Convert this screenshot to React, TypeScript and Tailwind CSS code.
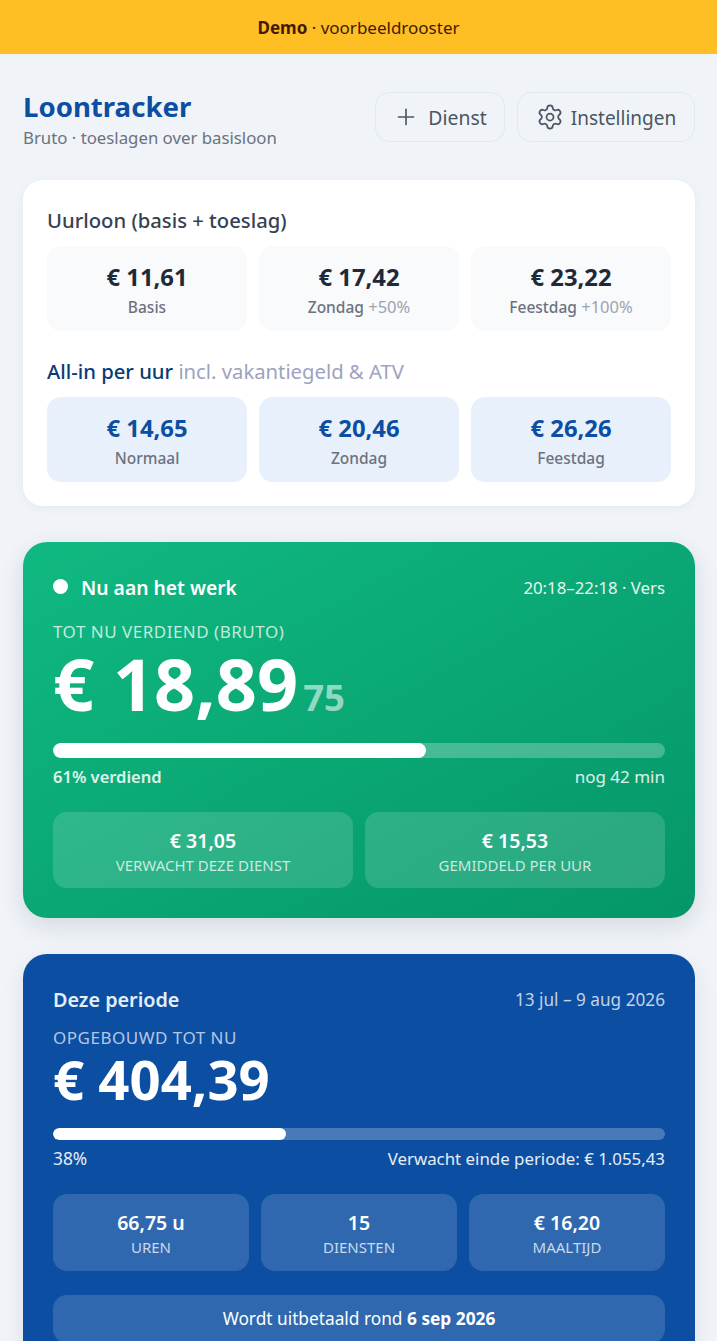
import { Plus, Settings } from "lucide-react";

function Tile({ value, label, extra, blue }: { value: string; label: string; extra?: string; blue?: boolean }) {
  return (
    <div className={`h-[85px] rounded-[14px] flex flex-col items-center pt-[15px] ${blue ? "bg-[#e8f0fb]" : "bg-[#f9fafc]"}`}>
      <div className={`text-[23.8px] leading-[33px] font-bold ${blue ? "text-[#0b4ea2]" : "text-[#1f2937]"}`}>{value}</div>
      <div className="text-[15.5px] leading-[22px] font-medium text-[#6b7280] mt-[2px]">
        {label}
        {extra ? <span className="text-[16.5px] font-normal text-[#9ca3af]"> {extra}</span> : null}
      </div>
    </div>
  );
}

function Stat({ value, label, h }: { value: string; label: string; h: string }) {
  return (
    <div className={`${h} rounded-[14px] bg-white/15 flex flex-col items-center pt-[17px]`}>
      <div className="text-[19.5px] leading-[24px] font-semibold text-white">{value}</div>
      <div className="text-[15px] leading-[20px] text-white/75 mt-[2px]">{label}</div>
    </div>
  );
}

export default function App() {
  return (
    <div className="h-[1341px] overflow-hidden bg-[#f0f4f9] font-['Noto_Sans',sans-serif]">
      <div className="h-[54px] pt-[1px] bg-[#fdbf24] flex items-center justify-center text-[17px] text-[#451a03]">
        <span><b className="font-bold">Demo</b> · voorbeeldrooster</span>
      </div>
      <div className="pl-[23px] pr-[22px]">
        <div className="flex items-start justify-between pt-[35px] h-[126px]">
          <div>
            <div className="text-[27.6px] leading-[34px] font-bold text-[#0b4ea2]">Loontracker</div>
            <div className="text-[16.8px] leading-[24px] text-[#6b7280] mt-[3px]">Bruto · toeslagen over basisloon</div>
          </div>
          <div className="flex gap-3 pt-[3px]">
            <div className="h-[50px] w-[130px] rounded-[14px] border border-[#e2e8f0] bg-[#f0f4f9] flex items-center justify-center gap-[9px] text-[19.4px] text-[#4b5563]">
              <Plus size={26} strokeWidth={1.5} />
              <span className="pt-[2px]">Dienst</span>
            </div>
            <div className="h-[50px] w-[178px] rounded-[14px] border border-[#e2e8f0] bg-[#f0f4f9] flex items-center justify-center gap-[7px] text-[19px] text-[#4b5563]">
              <Settings size={28} strokeWidth={1.5} />
              <span className="pt-[2px]">Instellingen</span>
            </div>
          </div>
        </div>

        <div className="h-[326px] rounded-[20px] bg-white shadow-[0_2px_10px_rgba(15,23,42,0.05)] px-[24px] pt-[25px]">
          <div className="text-[20.25px] leading-[30px] font-medium text-[#374151]">Uurloon (basis + toeslag)</div>
          <div className="grid grid-cols-3 gap-3 mt-[11px]">
            <Tile value="€ 11,61" label="Basis" />
            <Tile value="€ 17,42" label="Zondag" extra="+50%" />
            <Tile value="€ 23,22" label="Feestdag" extra="+100%" />
          </div>
          <div className="text-[20.25px] leading-[30px] font-medium text-[#0b3a75] mt-[25px]">
            All-in per uur <span className="font-normal text-[#9ca3c0]">incl. vakantiegeld &amp; ATV</span>
          </div>
          <div className="grid grid-cols-3 gap-3 mt-[11px]">
            <Tile blue value="€ 14,65" label="Normaal" />
            <Tile blue value="€ 20,46" label="Zondag" />
            <Tile blue value="€ 26,26" label="Feestdag" />
          </div>
        </div>

        <div className="mt-[36px] h-[376px] rounded-[24px] bg-gradient-to-br from-[#10b981] to-[#059669] shadow-[0_8px_24px_rgba(15,23,42,0.12)] px-[30px] pt-[30px] text-white">
          <div className="flex items-center justify-between h-[32px]">
            <div className="flex items-center gap-[13px]">
              <div className="w-[15px] h-[15px] rounded-full bg-white mb-[4px]" />
              <span className="text-[19.3px] font-semibold">Nu aan het werk</span>
            </div>
            <span className="text-[16.8px] text-white/90">20:18–22:18 · Vers</span>
          </div>
          <div className="text-[17px] tracking-[0.5px] leading-[22px] text-white/75 mt-[17px]">TOT NU VERDIEND (BRUTO)</div>
          <div className="flex items-baseline h-[74px] mt-[3px]">
            <span className="text-[72px] leading-[74px] font-bold">€ 18,89</span>
            <span className="text-[36.5px] font-bold text-white/55 ml-[5px]">75</span>
          </div>
          <div className="h-[15px] rounded-full bg-white/25 mt-[23px] overflow-hidden">
            <div className="h-full w-[61%] rounded-full bg-white" />
          </div>
          <div className="flex justify-between text-[16px] leading-[24px] mt-[7px]">
            <span className="text-[16.5px] font-semibold text-white/85">61% verdiend</span>
            <span className="text-[17px] text-white/85">nog 42 min</span>
          </div>
          <div className="grid grid-cols-2 gap-3 mt-[23px]">
            <Stat h="h-[76px]" value="€ 31,05" label="VERWACHT DEZE DIENST" />
            <Stat h="h-[76px]" value="€ 15,53" label="GEMIDDELD PER UUR" />
          </div>
        </div>

        <div className="mt-[36px] h-[420px] rounded-[24px] bg-[#0b4ea2] shadow-[0_8px_24px_rgba(15,23,42,0.08)] px-[30px] pt-[30px] text-white">
          <div className="flex items-center justify-between h-[32px]">
            <span className="text-[19.8px] font-semibold text-white/90">Deze periode</span>
            <span className="text-[17.2px] text-white/75">13 jul – 9 aug 2026</span>
          </div>
          <div className="text-[17px] tracking-[0.5px] leading-[22px] text-white/70 mt-[11px]">OPGEBOUWD TOT NU</div>
          <div className="text-[54.5px] leading-[60px] font-bold">€ 404,39</div>
          <div className="h-[12px] rounded-full bg-white/25 mt-[19px] overflow-hidden">
            <div className="h-full w-[38%] rounded-full bg-white" />
          </div>
          <div className="flex justify-between leading-[24px] text-white/90 mt-[7px]">
            <span className="text-[17.3px]">38%</span>
            <span className="text-[16.85px]">Verwacht einde periode: € 1.055,43</span>
          </div>
          <div className="grid grid-cols-3 gap-3 mt-[23px]">
            <Stat h="h-[77px]" value="66,75 u" label="UREN" />
            <Stat h="h-[77px]" value="15" label="DIENSTEN" />
            <Stat h="h-[77px]" value="€ 16,20" label="MAALTIJD" />
          </div>
          <div className="h-[48px] mt-[24px] rounded-[14px] bg-white/15 flex items-center justify-center text-[17.3px]">
            <span>Wordt uitbetaald rond <b className="font-bold">6 sep 2026</b></span>
          </div>
        </div>
      </div>
    </div>
  );
}
